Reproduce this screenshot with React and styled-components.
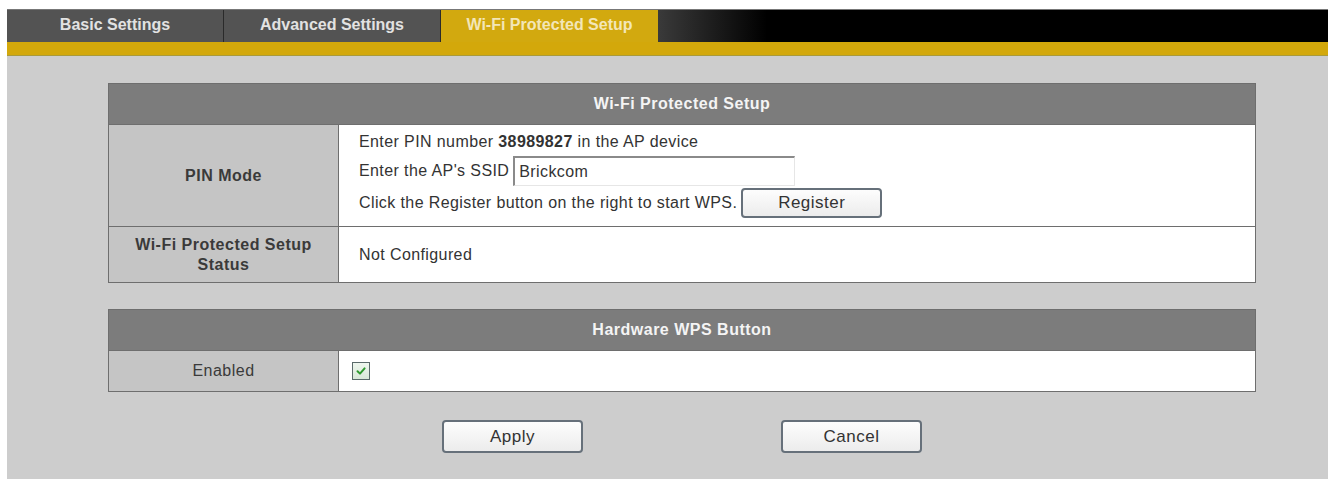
import React from "react";
import styled, { createGlobalStyle } from "styled-components";

const GlobalStyle = createGlobalStyle`
  html, body {
    margin: 0;
    padding: 0;
    background: #ffffff;
  }
  body {
    font-family: "Liberation Sans", Arial, sans-serif;
  }
`;

const Frame = styled.div`
  padding: 9px 1px 0 7px;
  height: 479px;
  box-sizing: border-box;
  display: flex;
  flex-direction: column;
`;

const TabBar = styled.div`
  display: flex;
  height: 33px;
  background: linear-gradient(90deg, #3a3a3a 651px, #000 760px);
  border-top: 1px solid #777;
  box-sizing: border-box;
`;

const Tab = styled.div`
  width: 217px;
  display: flex;
  align-items: center;
  justify-content: center;
  padding-bottom: 3px;
  box-sizing: border-box;
  font-size: 16px;
  font-weight: bold;
  color: ${(p) => (p.active ? "#f3e6b8" : "#e2e2e2")};
  background: ${(p) => (p.active ? "#d2a90f" : "#535353")};
  border-right: ${(p) => (p.active ? "none" : "1px solid #2a2a2a")};
`;

const YellowBand = styled.div`
  height: 13px;
  background: #d3a80b;
  border-bottom: 1px solid #a99a3a;
`;

const Content = styled.div`
  flex: 1;
  background: #cdcdcd;
  padding: 27px 72px 0 101px;
  display: flex;
  flex-direction: column;
  gap: 26px;
`;

const Table = styled.table`
  width: 100%;
  border-collapse: collapse;
  border: 1px solid #6e6e6e;
  font-size: 16px;
  letter-spacing: 0.4px;
  color: #333;
`;

const HeaderCell = styled.th`
  background: #7c7c7c;
  color: #f4f4f4;
  font-size: 16px;
  letter-spacing: 0.5px;
  font-weight: bold;
  height: 40px;
  padding: 0;
  text-align: center;
`;

const Label = styled.td`
  width: 230px;
  background: #c5c5c5;
  text-align: center;
  font-weight: ${(p) => (p.plain ? "normal" : "bold")};
  letter-spacing: 0.5px;
  color: #3a3a3a;
  border: 1px solid #6e6e6e;
  padding: 0 4px;
  line-height: 20px;
  height: ${(p) => p.h}px;
  box-sizing: border-box;
`;

const Value = styled.td`
  background: #ffffff;
  border: 1px solid #6e6e6e;
  padding: 0 0 0 20px;
  vertical-align: middle;
  color: #333;
`;

const Lines = styled.div`
  display: flex;
  flex-direction: column;
  margin-top: -3px;
`;

const Line = styled.div`
  display: flex;
  align-items: center;
  height: ${(p) => p.h}px;
  gap: 4px;
`;

const TextInput = styled.input`
  width: 282px;
  height: 30px;
  box-sizing: border-box;
  font-family: "Liberation Sans", Arial, sans-serif;
  font-size: 16px;
  letter-spacing: 0.4px;
  color: #333;
  padding: 0 4px;
  border: 1px solid #e6e6e6;
  border-top: 2px solid #8a8a8a;
  border-left: 2px solid #8a8a8a;
  background: #fff;
  outline: none;
`;

const Button = styled.button`
  width: ${(p) => p.w}px;
  height: ${(p) => p.h}px;
  font-family: "Liberation Sans", Arial, sans-serif;
  font-size: 17px;
  letter-spacing: 0.5px;
  color: #333;
  background: linear-gradient(#fdfdfd, #ececec);
  border: 2px solid #66707a;
  border-radius: 4px;
  padding: 0;
  cursor: pointer;
`;

const Check = styled.span`
  width: 18px;
  height: 18px;
  border: 1px solid #5a6a6a;
  background: linear-gradient(#eef6ee, #d8e8d8);
  display: inline-flex;
  align-items: center;
  justify-content: center;
  box-sizing: border-box;
  margin-left: -7px;
  vertical-align: middle;
`;

const ButtonRow = styled.div`
  display: flex;
  justify-content: center;
  gap: 198px;
  margin-top: 2px;
`;

const tabs = ["Basic Settings", "Advanced Settings", "Wi-Fi Protected Setup"];

export default function App() {
  return (
    <>
      <GlobalStyle />
      <Frame>
        <TabBar>
          {tabs.map((t, i) => (
            <Tab key={t} active={i === 2}>
              {t}
            </Tab>
          ))}
        </TabBar>
        <YellowBand />
        <Content>
          <Table>
            <thead>
              <tr>
                <HeaderCell colSpan={2}>Wi-Fi Protected Setup</HeaderCell>
              </tr>
            </thead>
            <tbody>
              <tr>
                <Label h={102}>PIN Mode</Label>
                <Value>
                  <Lines>
                    <Line h={30}>
                      <span>
                        Enter PIN number <b>38989827</b> in the AP device
                      </span>
                    </Line>
                    <Line h={28}>
                      <span>Enter the AP's SSID</span>
                      <TextInput defaultValue="Brickcom" />
                    </Line>
                    <Line h={36}>
                      <span>Click the Register button on the right to start WPS.</span>
                      <Button w={141} h={30}>
                        Register
                      </Button>
                    </Line>
                  </Lines>
                </Value>
              </tr>
              <tr>
                <Label h={56}>
                  Wi-Fi Protected Setup
                  <br />
                  Status
                </Label>
                <Value>Not Configured</Value>
              </tr>
            </tbody>
          </Table>

          <Table>
            <thead>
              <tr>
                <HeaderCell colSpan={2}>Hardware WPS Button</HeaderCell>
              </tr>
            </thead>
            <tbody>
              <tr>
                <Label h={41} plain>
                  Enabled
                </Label>
                <Value>
                  <Check>
                    <svg width="12" height="12" viewBox="0 0 12 12">
                      <path
                        d="M2.5 6.2 L5 8.6 L9.6 3.4"
                        fill="none"
                        stroke="#2e9a2e"
                        strokeWidth="2"
                        strokeLinecap="round"
                        strokeLinejoin="round"
                      />
                    </svg>
                  </Check>
                </Value>
              </tr>
            </tbody>
          </Table>

          <ButtonRow>
            <Button w={141} h={33}>
              Apply
            </Button>
            <Button w={141} h={33}>
              Cancel
            </Button>
          </ButtonRow>
        </Content>
      </Frame>
    </>
  );
}
